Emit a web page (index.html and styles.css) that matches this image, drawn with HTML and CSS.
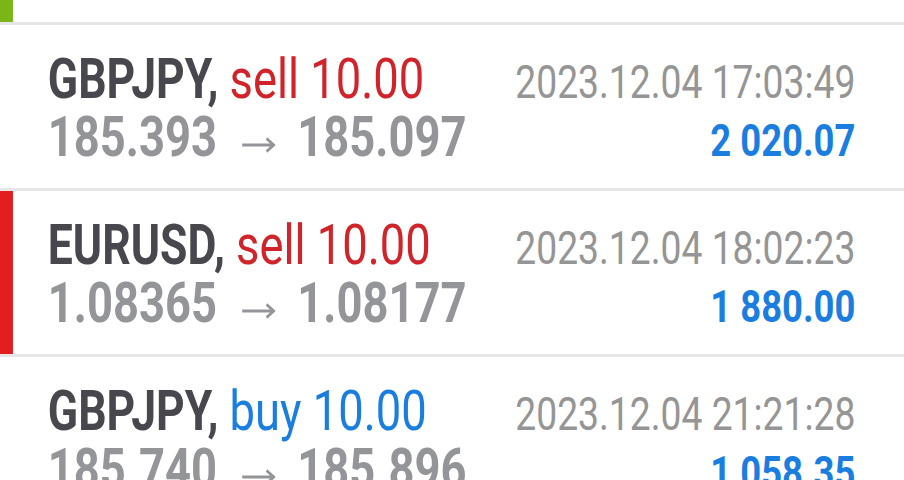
FILE: index.html
```html
<!DOCTYPE html>
<html lang="en">
<head>
  <meta charset="utf-8">
  <title>History</title>
  <link rel="stylesheet" href="styles.css">
</head>
<body>
<div class="deals">

  <!-- previous deal, scrolled almost out of view -->
  <div class="deal deal-tail">
    <div class="deal-bar buy"></div>
  </div>

  <div class="deal">
    <div class="deal-bar"></div>
    <div class="deal-body">
      <div class="deal-title">GBPJPY, <span class="side sell">sell 10.00</span></div>
      <div class="deal-time">2023.12.04 17:03:49</div>
      <div class="deal-prices">185.393<svg class="arrow" viewBox="0 0 42 16"><path d="M1 8H40M31 1.5L40 8L31 14.5"/></svg>185.097</div>
      <div class="deal-profit">2 020.07</div>
    </div>
  </div>

  <div class="deal">
    <div class="deal-bar sell"></div>
    <div class="deal-body">
      <div class="deal-title">EURUSD, <span class="side sell">sell 10.00</span></div>
      <div class="deal-time">2023.12.04 18:02:23</div>
      <div class="deal-prices">1.08365<svg class="arrow" viewBox="0 0 42 16"><path d="M1 8H40M31 1.5L40 8L31 14.5"/></svg>1.08177</div>
      <div class="deal-profit">1 880.00</div>
    </div>
  </div>

  <div class="deal">
    <div class="deal-bar"></div>
    <div class="deal-body">
      <div class="deal-title">GBPJPY, <span class="side buy">buy 10.00</span></div>
      <div class="deal-time">2023.12.04 21:21:28</div>
      <div class="deal-prices">185.740<svg class="arrow" viewBox="0 0 42 16"><path d="M1 8H40M31 1.5L40 8L31 14.5"/></svg>185.896</div>
      <div class="deal-profit">1 058.35</div>
    </div>
  </div>

</div>
</body>
</html>
```

FILE: styles.css
```css
html, body {
  overflow: hidden;
}

body {
  margin: 0;
  background-color: #fff;
  font-family: Roboto, "Liberation Sans", sans-serif;
  height: 480px;
}

/* the app font is narrower than Roboto, so the list is drawn wide and squeezed */
.deals {
  width: 1116px;
  transform: scaleX(0.81);
  transform-origin: 0 0;
}

.deal {
  display: flex;
  height: 163px;
  border-bottom: 3px solid #e6e6e6;
}

.deal-tail {
  height: 22px;
}

.deal-bar {
  width: 16px;
  flex-shrink: 0;
}
.deal-bar.buy {
  background-color: #7cb518;
}
.deal-bar.sell {
  background-color: #e31e1e;
}

.deal-body {
  flex: 1;
  display: grid;
  grid-template-columns: 1fr auto;
  grid-template-rows: 58px 58px;
  align-items: baseline;
  padding: 25px 60px 0 43px;
}

.deal-title {
  font-size: 55px;
  font-weight: 700;
  line-height: 58px;
  color: #47474d;
}

.side {
  font-weight: 400;
  font-size: 56px;
}
.side.sell {
  color: #d1232a;
}
.side.buy {
  color: #1a7ee0;
}

.deal-prices {
  font-size: 56px;
  font-weight: 700;
  line-height: 58px;
  color: #939598;
}

.arrow {
  width: 42px;
  height: 16px;
  margin: 0 27px 0 30px;
  vertical-align: 3px;
  fill: none;
  stroke: #939598;
  stroke-width: 3;
}

.deal-time {
  font-size: 46px;
  line-height: 58px;
  color: #959595;
  text-align: right;
}

.deal-profit {
  font-size: 45px;
  font-weight: 700;
  line-height: 58px;
  color: #1a7ee0;
  text-align: right;
}
```
